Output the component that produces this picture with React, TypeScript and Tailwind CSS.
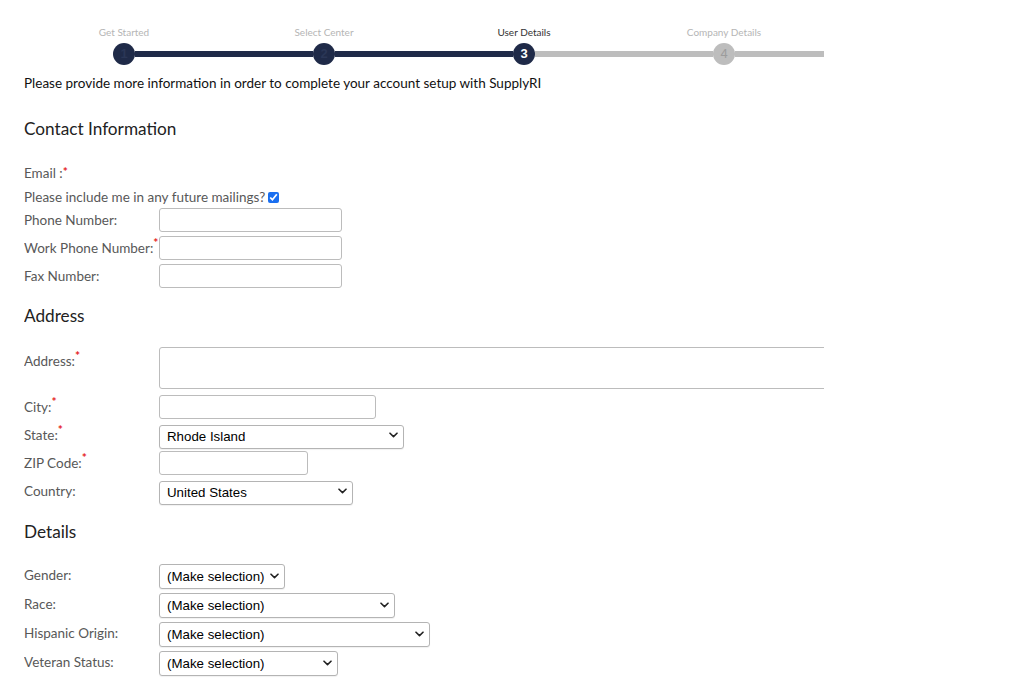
import React from 'react';

const STEPS = ['Get Started', 'Select Center', 'User Details', 'Company Details'];
const ACTIVE = 3;

function Req() {
  return <span className="text-[#e51c1c] text-[12px] font-bold align-top leading-none relative top-[-1px]">*</span>;
}

function Chevron() {
  return (
    <svg className="absolute right-[6px] top-1/2 -translate-y-1/2 pointer-events-none" width="9" height="6" viewBox="0 0 9 6">
      <path d="M1 1.2 L4.5 4.6 L8 1.2" fill="none" stroke="#222" strokeWidth="1.6" strokeLinecap="round" strokeLinejoin="round" />
    </svg>
  );
}

function Select({ value, width, h = 'h-[24px]' }: { value: string; width: string; h?: string }) {
  return (
    <div className={`relative ${width} ${h}`}>
      <select
        defaultValue={value}
        className="appearance-none w-full h-full border border-[#b4b4b4] rounded-[3px] bg-white pl-[7px] pr-[16px] text-[13.3px] text-black font-['Liberation_Sans',Arial,sans-serif] shadow-[0_1px_1px_rgba(0,0,0,0.06)]"
      >
        <option>{value}</option>
      </select>
      <Chevron />
    </div>
  );
}

function TextInput({ width, h = 'h-[24px]' }: { width: string; h?: string }) {
  return <input type="text" className={`${width} ${h} border border-[#bcbcbc] rounded-[3px] bg-white px-1 text-[13px]`} />;
}

function Row({ label, req, children, top }: { label: string; req?: boolean; children: React.ReactNode; top?: boolean }) {
  return (
    <div className={`flex ${top ? 'items-start' : 'items-center'}`}>
      <div className={`w-[135px] shrink-0 whitespace-nowrap text-[13.5px] text-[#585858] ${top ? 'pt-[4px]' : ''}`}>
        {label}
        {req && <Req />}
      </div>
      {children}
    </div>
  );
}

export default function App() {
  return (
    <div className="min-h-[683px] bg-white font-['Lato','Open_Sans',sans-serif]">
      <div className="ml-[24px] w-[800px] overflow-hidden">
        {/* stepper */}
        <div className="flex pt-[26px]">
          {STEPS.map((s, i) => {
            const n = i + 1;
            const done = n <= ACTIVE;
            const leftDark = n <= ACTIVE;
            const rightDark = n < ACTIVE;
            return (
              <div key={s} className="w-[200px] flex flex-col">
                <div className={`h-[12px] text-center text-[10px] leading-[12px] ${n === ACTIVE ? 'text-[#333]' : 'text-[#b5b5b5]'}`}>{s}</div>
                <div className="flex items-center h-[22px] mt-[5px]">
                  <div className={`flex-1 h-[6px] ${i === 0 ? 'bg-transparent' : leftDark ? 'bg-[#1f2a48]' : 'bg-[#bdbdbd]'}`} />
                  <div
                    className={`w-[22px] h-[22px] rounded-full flex items-center justify-center text-[13px] font-bold font-['Liberation_Sans',Arial,sans-serif] ${
                      done ? 'bg-[#1f2a48]' : 'bg-[#bdbdbd]'
                    } ${n === ACTIVE ? 'text-white' : done ? 'text-[#2a3656]' : 'text-[#9c9c9c] font-normal'}`}
                  >
                    {n}
                  </div>
                  <div className={`flex-1 h-[6px] ${rightDark ? 'bg-[#1f2a48]' : 'bg-[#bdbdbd]'}`} />
                </div>
              </div>
            );
          })}
        </div>

        <p className="mt-[9px] text-[13.5px] leading-[18px] text-[#111]">
          Please provide more information in order to complete your account setup with SupplyRI
        </p>

        {/* Contact */}
        <h2 className="mt-[25px] text-[17.2px] leading-[24px] text-[#222]">Contact Information</h2>
        <div className="mt-[20px] flex flex-col">
          <div className="h-[24px] flex items-center text-[13.5px] text-[#585858]">
            Email :<Req />
          </div>
          <div className="h-[22px] mt-[1px] flex items-center text-[13.5px] text-[#585858]">
            Please include me in any future mailings?
            <input type="checkbox" defaultChecked className="ml-[3px] w-[11px] h-[11px] accent-[#1a6ff0]" />
          </div>
          <div className="flex flex-col gap-[4px]">
            <Row label="Phone Number:">
              <TextInput width="w-[183px]" />
            </Row>
            <Row label="Work Phone Number:" req>
              <TextInput width="w-[183px]" />
            </Row>
            <Row label="Fax Number:">
              <TextInput width="w-[183px]" />
            </Row>
          </div>
        </div>

        {/* Address */}
        <h2 className="mt-[16px] text-[17.2px] leading-[24px] text-[#222]">Address</h2>
        <div className="mt-[19px] flex flex-col gap-[4px]">
          <Row label="Address:" req top>
            <textarea className="w-[720px] h-[42px] shrink-0 border border-[#bcbcbc] rounded-[3px] resize-none" />
          </Row>
          <div className="mt-[2px]">
            <Row label="City:" req>
              <TextInput width="w-[217px]" />
            </Row>
          </div>
          <Row label="State:" req>
            <Select value="Rhode Island" width="w-[245px]" />
          </Row>
          <Row label="ZIP Code:" req>
            <TextInput width="w-[149px]" />
          </Row>
          <Row label="Country:">
            <Select value="United States" width="w-[194px]" />
          </Row>
        </div>

        {/* Details */}
        <h2 className="mt-[17px] text-[17.2px] leading-[24px] text-[#222]">Details</h2>
        <div className="mt-[19px] flex flex-col gap-[4px] pb-[9px]">
          <Row label="Gender:">
            <Select value="(Make selection)" width="w-[126px]" h="h-[25px]" />
          </Row>
          <Row label="Race:">
            <Select value="(Make selection)" width="w-[236px]" h="h-[25px]" />
          </Row>
          <Row label="Hispanic Origin:">
            <Select value="(Make selection)" width="w-[271px]" h="h-[25px]" />
          </Row>
          <Row label="Veteran Status:">
            <Select value="(Make selection)" width="w-[179px]" h="h-[25px]" />
          </Row>
        </div>
      </div>
    </div>
  );
}
